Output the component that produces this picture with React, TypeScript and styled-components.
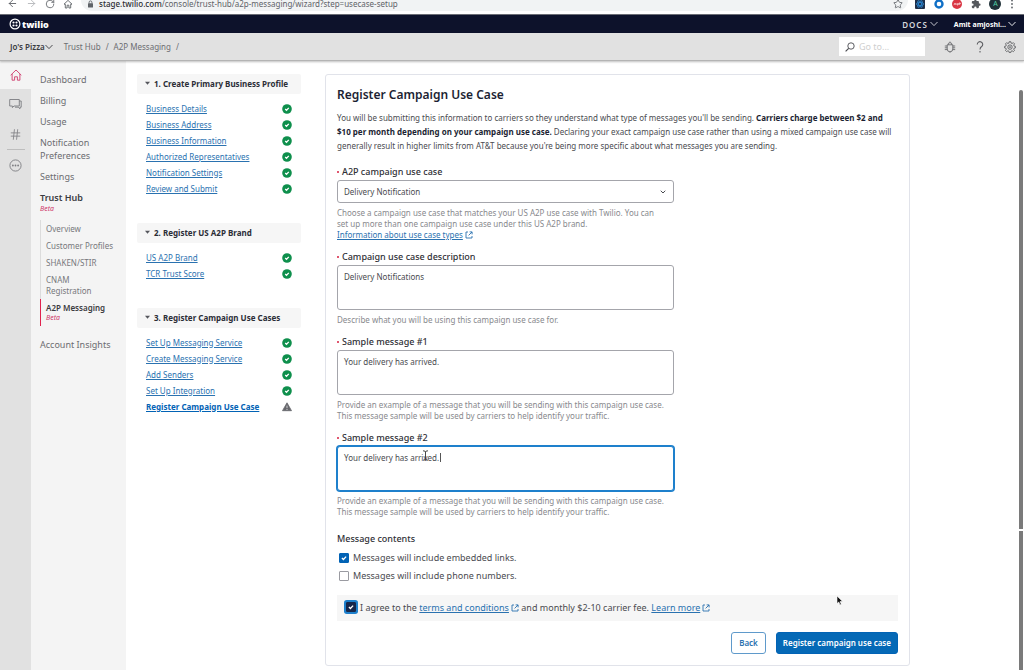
import React from 'react';
import styled, { createGlobalStyle, css } from 'styled-components';
import { ArrowLeft, ArrowRight, ChevronDown, Hash, RotateCw, Star } from 'lucide-react';

const Global = createGlobalStyle`
  *, *::before, *::after { box-sizing: border-box; }
  body {
    margin: 0;
    background: #fff;
    color: #4a4b50;
    font: 400 8px/11px "Noto Sans", "Open Sans", sans-serif;
  }
  button, input, select, textarea { font: inherit; color: inherit; margin: 0; }
  h1, h2, p, ul { margin: 0; padding: 0; }
  ul { list-style: none; }
  svg { display: block; flex: none; }
`;

const Page = styled.div`
  position: relative;
  display: flex;
  flex-direction: column;
  min-height: 100vh;
`;

/* Browser bar */
const BrowserBar = styled.header`
  display: flex;
  height: 15px;
  overflow: hidden;
  background: #fff;
  border-bottom: 1px solid #6b6d75;
`;
const BrowserTools = styled.div<{ $end?: boolean }>`
  display: flex;
  align-items: center;
  justify-content: space-between;
  flex: none;
  width: ${p => (p.$end ? 116 : 81)}px;
  height: 15px;
  margin-top: -4px;
  padding: ${p => (p.$end ? '0 10px 0 7px' : '0 8px 0 7px')};
  color: #5f6368;
`;
const AddressBar = styled.div`
  display: flex;
  align-items: center;
  gap: 5px;
  flex: 1;
  min-width: 0;
  height: 15px;
  margin-top: -4px;
  padding: 0 5px 0 6px;
  border-radius: 0 0 11px 11px;
  background: #f1f3f4;
  color: #5f6368;
`;
const Address = styled.span`
  flex: 1;
  white-space: nowrap;
  b { color: #2b2d31; font-weight: 500; }
`;

/* Product bar */
const ProductBar = styled.div`
  display: flex;
  align-items: center;
  height: 18px;
  padding: 0 8px 0 9px;
  background: #0d122b;
  color: #fff;
`;
const Brand = styled.a`
  display: flex;
  align-items: center;
  gap: 1px;
  color: #fff;
  font-size: 9px;
  font-weight: 900;
  text-decoration: none;
`;
const BarButton = styled.button<{ $spaced?: boolean }>`
  display: flex;
  align-items: center;
  gap: 2px;
  padding: 0;
  border: 0;
  background: none;
  ${p => p.$spaced
    ? css`margin-left: auto; margin-right: 16px; font-size: 8px; font-weight: 600; letter-spacing: 1px; color: #d5d6dc;`
    : css`font-size: 7px; font-weight: 700;`}
`;

/* Account bar */
const AccountBar = styled.div`
  display: flex;
  align-items: center;
  height: 28px;
  padding: 0 8px 0 10px;
  background: #e1e1e1;
  border-bottom: 1px solid #b4b4b4;
  box-shadow: 0 1px 2px rgba(0, 0, 0, 0.25);
  z-index: 1;
`;
const AccountButton = styled.button`
  display: flex;
  align-items: center;
  padding: 0;
  border: 0;
  background: none;
  font-weight: 600;
  color: #3a3b40;
`;
const Crumbs = styled.nav`
  display: flex;
  gap: 5px;
  margin-left: 11px;
  color: #6c6d71;
  a { color: inherit; text-decoration: none; }
`;
const SearchBox = styled.label`
  display: flex;
  align-items: center;
  gap: 4px;
  width: 86px;
  height: 19px;
  margin: 0 18px 0 auto;
  padding: 0 6px;
  background: #fff;
  color: #4a4b50;
  input {
    min-width: 0;
    width: 100%;
    padding: 0;
    border: 0;
    outline: 0;
    background: none;
    font-size: 9px;
  }
  input::placeholder { color: #cfcfcf; opacity: 1; }
`;
const ToolButtons = styled.div`
  display: flex;
  gap: 17px;
  color: #5c5d61;
`;
const IconButton = styled.button`
  display: grid;
  place-items: center;
  width: 13px;
  height: 13px;
  padding: 0;
  border: 0;
  background: none;
`;

/* Columns under the bars */
const Body = styled.div`
  display: flex;
  flex: 1;
`;
const Rail = styled.nav`
  display: flex;
  flex-direction: column;
  flex: none;
  width: 31px;
  background: #e1e1e1;
`;
const RailLink = styled.a<{ $active?: boolean }>`
  display: grid;
  place-items: center;
  height: ${p => (p.$active ? 28 : 30)}px;
  background: ${p => (p.$active ? '#f4f4f4' : 'transparent')};
  color: ${p => (p.$active ? '#cf3b6c' : '#7c7d81')};
`;
const RailDivider = styled.hr`
  width: 18px;
  margin: 0 auto;
  border: 0;
  border-top: 1px solid #bdbdbd;
`;
const SideNav = styled.nav`
  display: flex;
  flex-direction: column;
  gap: 8px;
  flex: none;
  width: 95px;
  padding: 12px 0 12px 9px;
  background: #f4f4f4;
  font-size: 9px;
  line-height: 13px;
`;
const NavLink = styled.a<{ $active?: boolean }>`
  width: 74px;
  color: ${p => (p.$active ? '#3a3b40' : '#6c6d71')};
  font-weight: ${p => (p.$active ? 600 : 400)};
  text-decoration: none;
`;
const Beta = styled.em`
  display: block;
  color: #cf3b6c;
  font-size: 7px;
  line-height: 10px;
  font-weight: 400;
`;
const SubNav = styled.ul`
  margin: -2px 0 4px;
  font-size: 8px;
  line-height: 11px;
`;
const SubItem = styled.li<{ $active?: boolean }>`
  padding: 3px 0 3px 5px;
  border-left: 1px solid ${p => (p.$active ? '#e0234e' : '#dcdcdc')};
  a {
    display: block;
    color: ${p => (p.$active ? '#3a3b40' : '#77787c')};
    font-weight: ${p => (p.$active ? 600 : 400)};
    text-decoration: none;
  }
`;
const Main = styled.main`
  display: grid;
  grid-template-columns: 164px minmax(0, 1fr);
  gap: 24px;
  align-items: start;
  flex: 1;
  padding: 13px 114px 4px 11px;
`;

/* Wizard steps */
const Steps = styled.aside`
  display: flex;
  flex-direction: column;
  gap: 26px;
`;
const StepHeading = styled.button`
  display: flex;
  align-items: center;
  gap: 4px;
  width: 100%;
  height: 20px;
  margin-bottom: 7px;
  padding: 0 8px 2px;
  border: 0;
  border-radius: 2px;
  background: #f6f6f6;
  color: #2b2d36;
  font-weight: 700;
`;
const Step = styled.li`
  display: flex;
  align-items: center;
  justify-content: space-between;
  height: 16px;
  padding: 0 9px;
  a { padding-bottom: 2px; }
`;
const Link = styled.a<{ $strong?: boolean }>`
  color: ${p => (p.$strong ? '#0263b5' : '#2a72b0')};
  font-weight: ${p => (p.$strong ? 700 : 400)};
  text-decoration: underline;
  svg { display: inline-block; margin-left: 2px; vertical-align: -1px; }
`;

/* Form card */
const Card = styled.form`
  display: flex;
  flex-direction: column;
  padding: 11px;
  border: 1px solid #e1e3ea;
  border-radius: 3px;
  background: #fff;
`;
const Title = styled.h1`
  margin-bottom: 7px;
  color: #1c1f33;
  font-size: 12px;
  line-height: 18px;
  font-weight: 600;
`;
const Intro = styled.p`
  margin-bottom: 13px;
  line-height: 14px;
  b { color: #1c1f33; font-weight: 700; }
`;
const Field = styled.div`
  position: relative;
  display: flex;
  flex-direction: column;
  width: 60%;
  margin-bottom: 11px;
`;
const Label = styled.label`
  margin-bottom: 2px;
  color: #2f3036;
  font-size: 9px;
  line-height: 12px;
  font-weight: 500;
`;
const Dot = styled.span`
  display: inline-block;
  width: 2px;
  height: 2px;
  margin-right: 3px;
  border-radius: 1px;
  background: #d61f3f;
  vertical-align: 2px;
`;
const SelectWrap = styled.div`
  position: relative;
  display: grid;
  svg { position: absolute; right: 7px; top: 8px; }
`;
const control = css`
  border: 1px solid #a4a5ab;
  border-radius: 3px;
  background: #fff;
  outline: 0;
`;
const Select = styled.select`
  ${control}
  appearance: none;
  height: 23px;
  padding: 0 6px;
`;
const TextArea = styled.textarea<{ $focused?: boolean }>`
  ${control}
  height: 45px;
  padding: 5px 6px;
  resize: none;
  ${p => p.$focused && css`border-color: #1e80cc; box-shadow: 0 0 0 1px #1e80cc;`}
`;
const TextCaret = styled.span`
  position: absolute;
  left: 103px;
  top: 21px;
  width: 1px;
  height: 9px;
  background: #555;
`;
const TextPointer = styled.svg`
  position: absolute;
  left: 85px;
  top: 18px;
`;
const Help = styled.p`
  margin-top: 4px;
  padding-right: 8px;
  color: #88898d;
`;
const Options = styled.fieldset`
  display: flex;
  flex-direction: column;
  min-width: 0;
  margin: 5px 0 0;
  padding: 0;
  border: 0;
  font-size: 9px;
  line-height: 12px;
  legend { margin-bottom: 4px; padding: 0; color: #2f3036; font-weight: 500; }
`;
const Option = styled.label`
  display: flex;
  align-items: center;
  gap: 4px;
  height: 18px;
  padding-left: 2px;
`;
const Checkbox = styled.input<{ $ring?: boolean }>`
  appearance: none;
  flex: none;
  width: 10px;
  height: 10px;
  border: 1px solid #9a9ba1;
  border-radius: 1px;
  background: #fff center / 8px 8px no-repeat;
  &:checked {
    border-color: ${p => (p.$ring ? '#16264a' : '#0263b5')};
    background-color: ${p => (p.$ring ? '#16264a' : '#0263b5')};
    background-image: url("data:image/svg+xml,%3Csvg xmlns='http://www.w3.org/2000/svg' viewBox='0 0 8 8' fill='none' stroke='white' stroke-width='1.3'%3E%3Cpath d='M1.9 4.1 3.4 5.5 6.1 2.6'/%3E%3C/svg%3E");
  }
  ${p => p.$ring && css`box-shadow: 0 0 0 2px #1e80cc;`}
`;
const Agreement = styled.div`
  position: relative;
  display: flex;
  align-items: center;
  gap: 4px;
  min-height: 26px;
  margin-top: 10px;
  padding: 0 9px 2px;
  background: #f6f6f6;
  font-size: 9px;
`;
const MousePointer = styled.svg`
  position: absolute;
  right: 54px;
  top: 0;
`;
const Actions = styled.div`
  display: flex;
  justify-content: flex-end;
  gap: 10px;
  margin-top: 11px;
`;
const Button = styled.button<{ $primary?: boolean }>`
  height: 22px;
  padding: 0 ${p => (p.$primary ? 6 : 7)}px 1px;
  border: 1px solid ${p => (p.$primary ? '#0263b5' : '#5f9acb')};
  border-radius: 3px;
  background: ${p => (p.$primary ? '#0569b6' : '#fff')};
  color: ${p => (p.$primary ? '#fff' : '#2a72b0')};
  font-weight: 600;
`;
const ScrollTrack = styled.div`
  position: absolute;
  right: 1px;
  top: 90px;
  bottom: 0;
  width: 4px;
  border-radius: 2px 2px 0 0;
  background: linear-gradient(#7a7a7a 439px, #fff 439px, #fff 441px, #7a7a7a 441px);
`;

const CheckIcon = () => (
  <svg width="10" height="10" viewBox="0 0 10 10" aria-label="Complete">
    <circle cx="5" cy="5" r="4.8" fill="#0e8f4c" />
    <path d="M3.2 5.1 4.5 6.3 6.8 3.9" fill="none" stroke="#fff" strokeWidth="1.3" />
  </svg>
);
const WarnIcon = () => (
  <svg width="10" height="10" viewBox="0 0 10 10" aria-label="Needs attention">
    <path d="M5 .8 9.5 8.7H.5Z" fill="#66676c" stroke="#66676c" strokeWidth=".8" strokeLinejoin="round" />
    <path d="M5 3.6V6.2M5 7v1" stroke="#d8d8da" strokeWidth=".9" />
  </svg>
);
const Caret = () => (
  <svg width="5" height="4" viewBox="0 0 5 4"><path d="M0 .7H5L2.500 3.700Z" fill="#55565c" /></svg>
);
const OpenIcon = () => (
  <svg width="8" height="8" viewBox="0 0 8 8" fill="none" stroke="#2a72b0" strokeWidth=".9">
    <path d="M3 1H1V7H7V5M4.6 .9H7.1V3.4M7 1 3.6 4.4" />
  </svg>
);
const TwilioMark = () => (
  <svg width="12" height="12" viewBox="0 0 12 12">
    <circle cx="6" cy="6" r="4.9" fill="none" stroke="#fff" strokeWidth="1.2" />
    <g fill="#fff"><circle cx="4.5" cy="4.5" r="1.1" /><circle cx="7.5" cy="4.5" r="1.1" /><circle cx="4.5" cy="7.5" r="1.1" /><circle cx="7.5" cy="7.5" r="1.1" /></g>
  </svg>
);
const WideChevron = () => (
  <svg width="8" height="6" viewBox="0 0 8 6"><path d="M.5 1 4 4.6 7.5 1" fill="none" stroke="currentColor" strokeWidth=".9" /></svg>
);
const BrowserHome = () => (
  <svg width="10" height="10" viewBox="0 0 10 10"><path d="M1 5.2 5 1.4 9 5.2H7.7V9H5.9V6.2H4.1V9H2.3V5.2Z" fill="none" stroke="currentColor" strokeWidth=".9" /></svg>
);
const LockIcon = () => (
  <svg width="7" height="8" viewBox="0 0 7 8"><rect x="1" y="3.2" width="5" height="4.3" rx=".5" fill="currentColor" /><path d="M2.1 3.5V2.3a1.4 1.4 0 0 1 2.8 0v1.2" fill="none" stroke="currentColor" strokeWidth=".9" /></svg>
);
const AtomExtension = () => (
  <svg width="10" height="10" viewBox="0 0 10 10"><rect width="10" height="10" rx="1" fill="#20304a" /><g fill="none" stroke="#2b8fe0" strokeWidth=".7"><ellipse cx="5" cy="5" rx="3.8" ry="1.5" /><ellipse cx="5" cy="5" rx="3.8" ry="1.5" transform="rotate(60 5 5)" /><ellipse cx="5" cy="5" rx="3.8" ry="1.5" transform="rotate(120 5 5)" /></g></svg>
);
const RingExtension = () => (
  <svg width="10" height="10" viewBox="0 0 10 10"><circle cx="5" cy="5" r="3.5" fill="#fff" stroke="#0f6fc6" strokeWidth="2.4" /></svg>
);
const RedExtension = () => (
  <svg width="10" height="10" viewBox="0 0 10 10"><circle cx="5" cy="5" r="5" fill="#d93644" /><path d="M2 6 3 4 4 6M5 4V6H6V4M7 6V4H8.3V5H7" fill="none" stroke="#fff" strokeWidth=".6" /></svg>
);
const PuzzleExtension = () => (
  <svg width="10" height="10" viewBox="0 0 24 24" fill="#55585d"><path d="M20.5 11H19V7a2 2 0 0 0-2-2h-4V3.5a2.5 2.5 0 0 0-5 0V5H4a2 2 0 0 0-2 2v3.8h1.5a2.7 2.7 0 0 1 0 5.4H2V20a2 2 0 0 0 2 2h3.8v-1.5a2.7 2.7 0 0 1 5.4 0V22H17a2 2 0 0 0 2-2v-4h1.5a2.5 2.5 0 0 0 0-5Z" /></svg>
);
const Avatar = styled.span`
  display: grid;
  place-items: center;
  width: 12px;
  height: 12px;
  border-radius: 6px;
  background: #1f3138;
  color: #4fd1a5;
  font-size: 7px;
`;
const DotsIcon = () => (
  <svg width="4" height="10" viewBox="0 0 4 10" fill="#5f6368"><circle cx="2" cy="1.5" r=".9" /><circle cx="2" cy="5" r=".9" /><circle cx="2" cy="8.5" r=".9" /></svg>
);
const SearchIcon = () => (
  <svg width="10" height="10" viewBox="0 0 10 10" fill="none" stroke="currentColor" strokeWidth=".9"><circle cx="6" cy="4" r="3.2" /><path d="M3.7 6.3.6 9.4" strokeWidth="1.2" /></svg>
);
const BugIcon = () => (
  <svg width="12" height="12" viewBox="0 0 12 12" fill="none" stroke="currentColor" strokeWidth=".8">
    <path d="M3.2 3.8H8.8V8A2.8 2.8 0 0 1 3.2 8ZM4.3 3.8V2.9A1 1 0 0 1 5.3 1.9H6.7A1 1 0 0 1 7.7 2.9V3.8M3.2 5H.8M3.2 6.8H.8M3.2 8.6H.8M8.8 5H11.2M8.8 6.8H11.2M8.8 8.6H11.2M6 .6V1.9M6 10.8V11.7" />
  </svg>
);
const HelpIcon = () => (
  <svg width="12" height="12" viewBox="0 0 12 12" fill="none" stroke="currentColor" strokeWidth="1.1"><path d="M3.3 3.5A2.7 2.7 0 1 1 7.6 5.5Q6 6.6 6 8.6M6 10.1V11.6" /></svg>
);
const GearIcon = () => (
  <svg width="12" height="12" viewBox="0 0 12 12" fill="none" stroke="currentColor" strokeWidth=".9">
    <path d="M5.2.7h1.600l.3 1.400 1 .4 1.300-.8 1.100 1.100-.8 1.300.4 1 1.300.3v1.500l-1.300.3-.4 1 .8 1.300-1.100 1.100-1.300-.8-1 .4-.3 1.300H5.200l-.3-1.300-1-.4-1.300.8-1.100-1.100.8-1.300-.4-1-1.300-.3V5.400l1.300-.3.4-1-.8-1.300L2.600 1.700l1.300.8 1-.4Z" />
    <circle cx="6" cy="6.1" r="2.2" /><circle cx="6" cy="6.1" r=".5" />
  </svg>
);
const HomeIcon = () => (
  <svg width="12" height="12" viewBox="0 0 12 12" fill="none" stroke="currentColor" strokeWidth=".9"><path d="M.7 6.2 6 1 11.3 6.2M2.1 5V11.2H4.6V7.8H7.4V11.2H9.9V5" /></svg>
);
const ChatIcon = () => (
  <svg width="13" height="12" viewBox="0 0 13 12" fill="none" stroke="currentColor" strokeWidth=".9"><path d="M.7 1.5H10.3V8H5L3.4 9.6V8H.7ZM10.3 3H12.2V9.2H11V10.8L9.2 9.2H6" /></svg>
);
const MoreIcon = () => (
  <svg width="13" height="13" viewBox="0 0 13 13"><circle cx="6.5" cy="6.5" r="5.6" fill="none" stroke="currentColor" strokeWidth=".9" /><g fill="currentColor"><circle cx="3.9" cy="6.5" r=".9" /><circle cx="6.5" cy="6.5" r=".9" /><circle cx="9.1" cy="6.5" r=".9" /></g></svg>
);

const STEPS = [
  { title: '1. Create Primary Business Profile', items: ['Business Details', 'Business Address', 'Business Information', 'Authorized Representatives', 'Notification Settings', 'Review and Submit'] },
  { title: '2. Register US A2P Brand', items: ['US A2P Brand', 'TCR Trust Score'] },
  { title: '3. Register Campaign Use Cases', items: ['Set Up Messaging Service', 'Create Messaging Service', 'Add Senders', 'Set Up Integration', 'Register Campaign Use Case'] },
];
const CURRENT = 'Register Campaign Use Case';
const SAMPLE_HELP = 'Provide an example of a message that you will be sending with this campaign use case. This message sample will be used by carriers to help identify your traffic.';

function TextField({ id, label, value, help, focused }: { id: string; label: string; value: string; help: string; focused?: boolean }) {
  return (
    <Field>
      <Label htmlFor={id}><Dot />{label}</Label>
      <TextArea id={id} defaultValue={value} $focused={focused} />
      {focused && <TextCaret />}
      {focused && (
        <TextPointer width="7" height="11" viewBox="0 0 7 11" fill="none" stroke="#333" strokeWidth=".9">
          <path d="M1 .8Q3.5.8 3.5 2V9Q3.5 10.2 1 10.2M6 .8Q3.5.8 3.5 2M3.5 9Q3.5 10.2 6 10.2" />
        </TextPointer>
      )}
      <Help>{help}</Help>
    </Field>
  );
}

export default function App() {
  return (
    <Page>
      <Global />
      <BrowserBar>
        <BrowserTools>
          <ArrowLeft size={11} /><ArrowRight size={11} color="#b5b7ba" /><RotateCw size={10} /><BrowserHome />
        </BrowserTools>
        <AddressBar>
          <LockIcon />
          <Address><b>stage.twilio.com</b>/console/trust-hub/a2p-messaging/wizard?step=usecase-setup</Address>
          <Star size={10} />
        </AddressBar>
        <BrowserTools $end>
          <AtomExtension /><RingExtension /><RedExtension /><PuzzleExtension /><Avatar>A</Avatar><DotsIcon />
        </BrowserTools>
      </BrowserBar>

      <ProductBar>
        <Brand href="#"><TwilioMark />twilio</Brand>
        <BarButton $spaced>DOCS <WideChevron /></BarButton>
        <BarButton>Amit amjoshi... <WideChevron /></BarButton>
      </ProductBar>

      <AccountBar>
        <AccountButton>Jo's Pizza<WideChevron /></AccountButton>
        <Crumbs><a href="#">Trust Hub</a><span>/</span><a href="#">A2P Messaging</a><span>/</span></Crumbs>
        <SearchBox><SearchIcon /><input type="text" placeholder="Go to..." aria-label="Go to" /></SearchBox>
        <ToolButtons>
          <IconButton aria-label="Debugger"><BugIcon /></IconButton>
          <IconButton aria-label="Help"><HelpIcon /></IconButton>
          <IconButton aria-label="Settings"><GearIcon /></IconButton>
        </ToolButtons>
      </AccountBar>

      <Body>
        <Rail>
          <RailLink href="#" $active aria-label="Home"><HomeIcon /></RailLink>
          <RailLink href="#" aria-label="Messaging"><ChatIcon /></RailLink>
          <RailLink href="#" aria-label="Phone numbers"><Hash size={13} strokeWidth={1.5} /></RailLink>
          <RailDivider />
          <RailLink href="#" aria-label="More"><MoreIcon /></RailLink>
        </Rail>
        <SideNav>
          <NavLink href="#">Dashboard</NavLink>
          <NavLink href="#">Billing</NavLink>
          <NavLink href="#">Usage</NavLink>
          <NavLink href="#">Notification Preferences</NavLink>
          <NavLink href="#">Settings</NavLink>
          <NavLink href="#" $active>Trust Hub<Beta>Beta</Beta></NavLink>
          <SubNav>
            <SubItem><a href="#">Overview</a></SubItem>
            <SubItem><a href="#">Customer Profiles</a></SubItem>
            <SubItem><a href="#">SHAKEN/STIR</a></SubItem>
            <SubItem><a href="#">CNAM<br />Registration</a></SubItem>
            <SubItem $active><a href="#">A2P Messaging<Beta>Beta</Beta></a></SubItem>
          </SubNav>
          <NavLink href="#">Account Insights</NavLink>
        </SideNav>

        <Main>
          <Steps>
            {STEPS.map(section => (
              <section key={section.title}>
                <StepHeading><Caret />{section.title}</StepHeading>
                <ul>
                  {section.items.map(item => (
                    <Step key={item}>
                      <Link href="#" $strong={item === CURRENT}>{item}</Link>
                      {item === CURRENT ? <WarnIcon /> : <CheckIcon />}
                    </Step>
                  ))}
                </ul>
              </section>
            ))}
          </Steps>

          <Card onSubmit={e => e.preventDefault()}>
            <Title>Register Campaign Use Case</Title>
            <Intro>
              You will be submitting this information to carriers so they understand what type of messages you'll be sending.{' '}
              <b>Carriers charge between $2 and $10 per month depending on your campaign use case.</b> Declaring your exact
              campaign use case rather than using a mixed campaign use case will generally result in higher limits from
              AT&amp;T because you're being more specific about what messages you are sending.
            </Intro>

            <Field>
              <Label htmlFor="usecase"><Dot />A2P campaign use case</Label>
              <SelectWrap>
                <Select id="usecase" defaultValue="Delivery Notification"><option>Delivery Notification</option></Select>
                <ChevronDown size={8} strokeWidth={3} />
              </SelectWrap>
              <Help>
                Choose a campaign use case that matches your US A2P use case with Twilio. You can set up more than one
                campaign use case under this US A2P brand.<br />
                <Link href="#">Information about use case types</Link><Link href="#" aria-label="Open in new tab"><OpenIcon /></Link>
              </Help>
            </Field>
            <TextField id="description" label="Campaign use case description" value="Delivery Notifications" help="Describe what you will be using this campaign use case for." />
            <TextField id="sample1" label="Sample message #1" value="Your delivery has arrived." help={SAMPLE_HELP} />
            <TextField id="sample2" label="Sample message #2" value="Your delivery has arrived." help={SAMPLE_HELP} focused />

            <Options>
              <legend>Message contents</legend>
              <Option><Checkbox type="checkbox" defaultChecked />Messages will include embedded links.</Option>
              <Option><Checkbox type="checkbox" />Messages will include phone numbers.</Option>
            </Options>

            <Agreement>
              <Checkbox type="checkbox" id="agree" defaultChecked $ring />
              <label htmlFor="agree">
                I agree to the <Link href="#">terms and conditions</Link><Link href="#" aria-label="Open terms"><OpenIcon /></Link>{' '}
                and monthly $2-10 carrier fee. <Link href="#">Learn more</Link><Link href="#" aria-label="Open details"><OpenIcon /></Link>
              </label>
              <MousePointer width="8" height="11" viewBox="0 0 8 11">
                <path d="M1 1V8.6L2.8 7 4 9.9 5.3 9.3 4.1 6.5H6.6Z" fill="#111" stroke="#fff" strokeWidth=".6" />
              </MousePointer>
            </Agreement>

            <Actions>
              <Button type="button">Back</Button>
              <Button type="submit" $primary>Register campaign use case</Button>
            </Actions>
          </Card>
        </Main>
      </Body>
      <ScrollTrack />
    </Page>
  );
}
